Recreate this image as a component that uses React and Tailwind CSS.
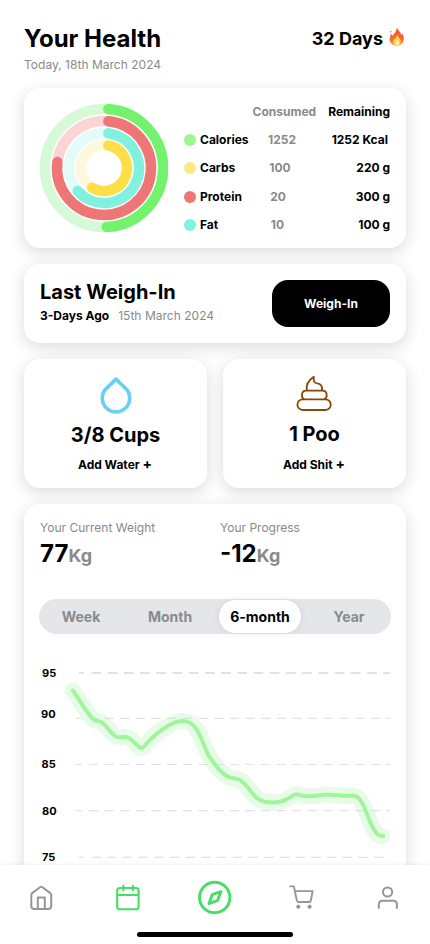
import React from 'react';

// Shared card look
const CARD = 'rounded-2xl bg-white shadow-[0_4px_16px_rgba(0,0,0,0.15)]';

// Rows of the nutrition table
const nutrients = [
  { name: 'Calories', dot: 'bg-[#9af792]', consumed: '1252', remaining: '1252 Kcal', shift: '', pad: 'pr-[2px]' },
  { name: 'Carbs', dot: 'bg-[#fee883]', consumed: '100', remaining: '220 g', shift: 'pr-[4px]', pad: '' },
  { name: 'Protein', dot: 'bg-[#ef7676]', consumed: '20', remaining: '300 g', shift: 'pr-[8px]', pad: '' },
  { name: 'Fat', dot: 'bg-[#80f2df]', consumed: '10', remaining: '100 g', shift: 'pr-[9px]', pad: '' },
];

// Rings, from the outermost to the innermost
const rings = [
  { r: 59, track: '#d5fad5', color: '#73f26e', d: 'M68.3 5.1A59 59 0 0 1 66.7 122.9' },
  { r: 47, track: '#fbd5d6', color: '#ee7676', d: 'M68.3 17.2A47 47 0 1 1 17.4 58' },
  { r: 35, track: '#e4fcf9', color: '#80f1de', d: 'M68.3 29.3A35 35 0 1 1 37.7 87' },
  { r: 23, track: '#fff8dc', color: '#fedf48', d: 'M68.3 41.4A23 23 0 1 1 52 83.6' },
];

const gridLines = [
  { label: '95', y: 23, x: 2, textY: 27, first: 5, dash: 9.8, gap: 6.4, width: 1.8 },
  { label: '90', y: 68.3, x: 1, textY: 68.3, first: 6, dash: 9.2, gap: 6.45, width: 1.2 },
  { label: '85', y: 114.5, x: 1.5, textY: 117.5, first: 6, dash: 9.2, gap: 6.45, width: 1.2 },
  { label: '80', y: 160.6, x: 2, textY: 165, first: 6, dash: 9.2, gap: 6.45, width: 1.2 },
  { label: '75', y: 207.3, x: 2, textY: 211, first: 5, dash: 9.4, gap: 6.3, width: 1.2 },
];

const WEIGHT_LINE =
  'M33 40.7C39 49 45 60 52 68C57 73 58 70 62 72.5C68 77 71 84 77 87C82 88 84 86 88 87.6C95 91 98 98 101.7 98C105 97 107 92 113.3 86.7C121 80 132 71 142.3 71C159 71 161 92 169 106C174 114 179 121 186 125.5C191 129 195 128 199 129.5C208 134 212 146 219 149.5C225 153 239 154 247 149C251 147 253 144.5 256.5 144.3C260 144.5 261 146.3 267 146.3C275 146.3 280 144.7 287 144.7C296 144.7 303 146.5 313.3 145.6C326 147 328 178 338 184.5C340 186 341 186 343.3 186';

// Header with the title and the streak
function Header() {
  return (
    <header className="flex justify-between px-6 pt-6">
      <div>
        <h1 className="text-2xl leading-[30px] font-bold">Your Health</h1>
        <p className="mt-[3px] text-[12px] leading-4 tracking-[0.02px] text-[#8a8a8a]">Today, 18th March 2024</p>
      </div>
      <div className="flex h-[30px] items-center gap-[5px] text-lg font-bold">
        <span>32 Days</span>
        <Flame />
      </div>
    </header>
  );
}

function Flame() {
  return (
    <svg width="18" height="20" viewBox="0 0 18 20" className="mb-1">
      <defs>
        <linearGradient id="flame" x1="0" y1="0" x2="0" y2="1">
          <stop offset="0" stopColor="#f4512f" />
          <stop offset="0.65" stopColor="#fc6833" />
          <stop offset="1" stopColor="#fba331" />
        </linearGradient>
      </defs>
      <path
        d="M8.6 0.4C9.4 2.8 12.8 4.2 13.2 8.1C13.8 7.5 13.9 6.7 13.8 5.9C15.1 7.4 16 9.8 15.7 12.3C15.3 16.3 12.5 18.8 8.9 18.8C4.9 18.8 1.7 16.1 1.6 12.2C1.6 9.8 2.5 8.1 3.3 6.4C3.7 7.3 3.9 8.1 4.6 8.8C5.8 6.5 8.9 4.5 8.6 0.4Z"
        fill="url(#flame)"
      />
      <path
        d="M9.3 7.6C9.4 10 12.7 11 12.7 14.4C12.7 17 11.2 18.5 9 18.5C6.6 18.5 4.8 17 4.8 14.7C4.8 13.2 5.4 12.3 6 11.5C6.3 12.1 6.6 12.4 7.1 12.5C7 10.6 8.8 9.7 9.3 7.6Z"
        fill="#ffd044"
      />
      <path d="M9.1 12.3C9.5 13.6 11.1 14.4 11.1 16.1C11.1 17.6 10.1 18.4 9 18.4C7.7 18.4 6.8 17.5 6.8 16.2C6.8 14.6 8.7 13.8 9.1 12.3Z" fill="#fff2a8" />
      <circle cx="2.7" cy="4.8" r="0.7" fill="#f4512f" />
    </svg>
  );
}

// Rings and the nutrition table
function NutritionCard() {
  return (
    <section className={`${CARD} flex h-40 p-4`}>
      <svg width="128" height="128" viewBox="0 0 128 128" fill="none" className="shrink-0">
        {rings.map((ring) => (
          <g key={ring.r} strokeWidth="10.4">
            <circle cx="64" cy="64" r={ring.r} stroke={ring.track} />
            <path d={ring.d} stroke={ring.color} strokeLinecap="round" />
          </g>
        ))}
      </svg>
      <div className="ml-4 flex flex-1 flex-col text-[12px] leading-4 font-bold">
        <div className="flex justify-end gap-3">
          <span className="text-[#8a8a8a]">Consumed</span>
          <span>Remaining</span>
        </div>
        <div className="mt-3 flex flex-col gap-[12.3px]">
          {nutrients.map((item) => (
            <div key={item.name} className="flex h-4 items-center">
              <span className={`size-3 rounded-full ${item.dot}`} />
              <span className="ml-1 w-[50px]">{item.name}</span>
              <span className={`w-16 text-center text-[#8a8a8a] ${item.shift}`}>{item.consumed}</span>
              <span className={`flex-1 text-right ${item.pad}`}>{item.remaining}</span>
            </div>
          ))}
        </div>
      </div>
    </section>
  );
}

function WeighInCard() {
  return (
    <section className={`${CARD} flex h-[79px] items-center justify-between px-4`}>
      <div className="pb-1">
        <h2 className="text-xl leading-6 font-bold">Last Weigh-In</h2>
        <p className="mt-1 text-[12px] leading-4">
          <span className="font-bold">3-Days Ago</span>
          <span className="ml-[9px] tracking-[0.02px] text-[#8a8a8a]">15th March 2024</span>
        </p>
      </div>
      <button className="h-[47px] w-[118px] rounded-2xl bg-black text-[12px] font-bold text-white">Weigh-In</button>
    </section>
  );
}

// Water and poo counters
function Counters() {
  return (
    <div className="grid grid-cols-2 gap-4">
      <section className={`${CARD} flex h-[129px] flex-col items-center pt-4`}>
        <svg width="36" height="40" viewBox="0 0 36 40" fill="none" stroke="#6ad0f1" strokeWidth="3.7" strokeLinejoin="round">
          <path d="M18 4.2L8 13.8A13.7 13.7 0 1 0 28 13.8Z" />
        </svg>
        <h2 className="mt-2 text-xl leading-6 font-bold">3/8 Cups</h2>
        <p className="mt-[9px] pr-px text-[12px] leading-4 font-bold">
          Add Water <span className="text-sm leading-4">+</span>
        </p>
      </section>
      <section className={`${CARD} flex h-[129px] flex-col items-center pt-4`}>
        <svg width="37" height="38" viewBox="0 0 37 38" fill="none" stroke="#884706" strokeWidth="1.8" strokeLinejoin="round">
          <rect x="1.4" y="24.4" width="33.4" height="10.6" rx="5.3" />
          <path d="M8.2 24.3C4.8 22.5 5 15.6 10.2 15.6H26.5C31.6 15.6 31.8 22.5 28.4 24.3" />
          <path d="M11 15.5C9.5 9 12.5 5.3 17.8 1.8C17.5 4.5 17.5 8 21 8.3C25 8.6 26.6 11.5 25.9 15.5" />
        </svg>
        <h2 className="mt-[9px] text-xl leading-6 font-bold">1 Poo</h2>
        <p className="mt-[10px] pr-px text-[12px] leading-4 font-bold">
          Add Shit <span className="text-sm leading-4">+</span>
        </p>
      </section>
    </div>
  );
}

function Stat({ label, value }) {
  return (
    <div className="w-[180px] shrink-0">
      <p className="text-[12px] leading-4 text-[#8a8a8a]">{label}</p>
      <p className="mt-[3px] text-2xl leading-[30px] font-bold">
        {value}
        <span className="text-lg text-[#8a8a8a]">Kg</span>
      </p>
    </div>
  );
}

// Weight over time
function WeightChart() {
  return (
    <svg width="350" height="230" viewBox="0 0 350 230" fill="none" className="mt-4">
      {gridLines.map((line) => (
        <g key={line.label}>
          <text x={line.x} y={line.textY} fill="#000" className="text-[11px] font-bold">
            {line.label}
          </text>
          <path d={`M${line.first === 5 ? 39 : 36} ${line.y}h${line.first}`} stroke="#e2e2e4" strokeWidth={line.width} />
          <path
            d={`M${line.first === 5 ? 51.5 : 49} ${line.y}H350`}
            stroke="#e2e2e4"
            strokeWidth={line.width}
            strokeDasharray={`${line.dash} ${line.gap}`}
          />
        </g>
      ))}
      <path d={WEIGHT_LINE} stroke="#9cf59a" strokeOpacity="0.25" strokeWidth="16" strokeLinecap="round" strokeLinejoin="round" />
      <path d={WEIGHT_LINE} stroke="#a0f59c" strokeWidth="4" strokeLinecap="round" strokeLinejoin="round" />
    </svg>
  );
}

function WeightCard() {
  return (
    <section className={`${CARD} h-[440px] px-4 pt-4`}>
      <div className="flex">
        <Stat label="Your Current Weight" value="77" />
        <Stat label="Your Progress" value="-12" />
      </div>
      <div className="-mx-px mt-[30px] flex h-[35px] items-center rounded-full bg-[#e5e6ea] text-sm font-bold text-[#8a8a8a] -translate-y-px">
        <span className="w-[84px] text-center">Week</span>
        <span className="w-[96px] pr-[2px] text-center">Month</span>
        <span className="flex h-[33px] w-[82px] items-center justify-center rounded-full bg-white text-black shadow-[0_0_8px_rgba(0,0,0,0.08)]">
          6-month
        </span>
        <span className="flex-1 pl-[6px] text-center">Year</span>
      </div>
      <div className="-mt-px">
        <WeightChart />
      </div>
    </section>
  );
}

// Bottom navigation with the home indicator
function BottomNav() {
  return (
    <nav className="relative flex h-[79px] shrink-0 flex-col items-center bg-white shadow-[0_-1px_3px_rgba(0,0,0,0.06)]">
      <div className="flex w-full justify-between px-[23px] pt-[14px]">
        <svg width="36" height="36" viewBox="0 0 36 36" fill="none" stroke="#969696" strokeWidth="2" strokeLinejoin="round">
          <path d="M11.3 30H25.2A3 3 0 0 0 28.2 27V16.2Q28.2 14.8 27 13.9L19.4 8.2Q18.2 7.3 17 8.2L9.5 13.9Q8.3 14.8 8.3 16.2V27A3 3 0 0 0 11.3 30Z" />
          <path d="M14.8 30V18.5H21.8V30" />
        </svg>
        <svg width="36" height="36" viewBox="0 0 36 36" fill="none" stroke="#43df63" strokeWidth="2.1" strokeLinecap="round">
          <rect x="7.2" y="9" width="21.4" height="21.3" rx="2.6" />
          <path d="M7.4 16H28.4M13.4 6.8V11.2M22.9 6.8V11.2" />
        </svg>
        <svg width="36" height="36" viewBox="0 0 36 36" fill="none" stroke="#43df63" strokeWidth="2.9" strokeLinejoin="round">
          <circle cx="17.7" cy="18.5" r="15.2" />
          <path d="M23.9 12.6L15.3 15.5L12 24.6L20.6 21.5Z" />
        </svg>
        <svg width="36" height="36" viewBox="0 0 36 36" fill="none" stroke="#969696" strokeWidth="1.9" strokeLinecap="round" strokeLinejoin="round">
          <path d="M6.2 7.4H9.9L12.8 21.3Q13.1 23 14.6 23H25.1Q26.6 23 26.9 21.5L28.6 12.1H11" />
          <circle cx="14.3" cy="27.7" r="1.1" fill="#969696" />
          <circle cx="25.6" cy="27.7" r="1.1" fill="#969696" />
        </svg>
        <svg width="36" height="36" viewBox="0 0 36 36" fill="none" stroke="#969696" strokeWidth="2" strokeLinecap="round">
          <circle cx="16.6" cy="13" r="4.6" />
          <path d="M7.8 29V25.6C7.8 23.3 9.3 21.8 11.6 21.8H22C24.3 21.8 25.9 23.3 25.9 25.6V29" />
        </svg>
      </div>
      <div className="mt-[17px] h-[5px] w-[156px] shrink-0 rounded-full bg-black" />
    </nav>
  );
}

export default function App() {
  return (
    <div className="flex h-screen w-full flex-col overflow-hidden bg-white font-['Inter',sans-serif] text-black">
      <main className="flex-1 overflow-hidden">
        <Header />
        <div className="mt-[15px] flex flex-col gap-4 px-6">
          <NutritionCard />
          <WeighInCard />
          <Counters />
          <WeightCard />
        </div>
      </main>
      <BottomNav />
    </div>
  );
}
